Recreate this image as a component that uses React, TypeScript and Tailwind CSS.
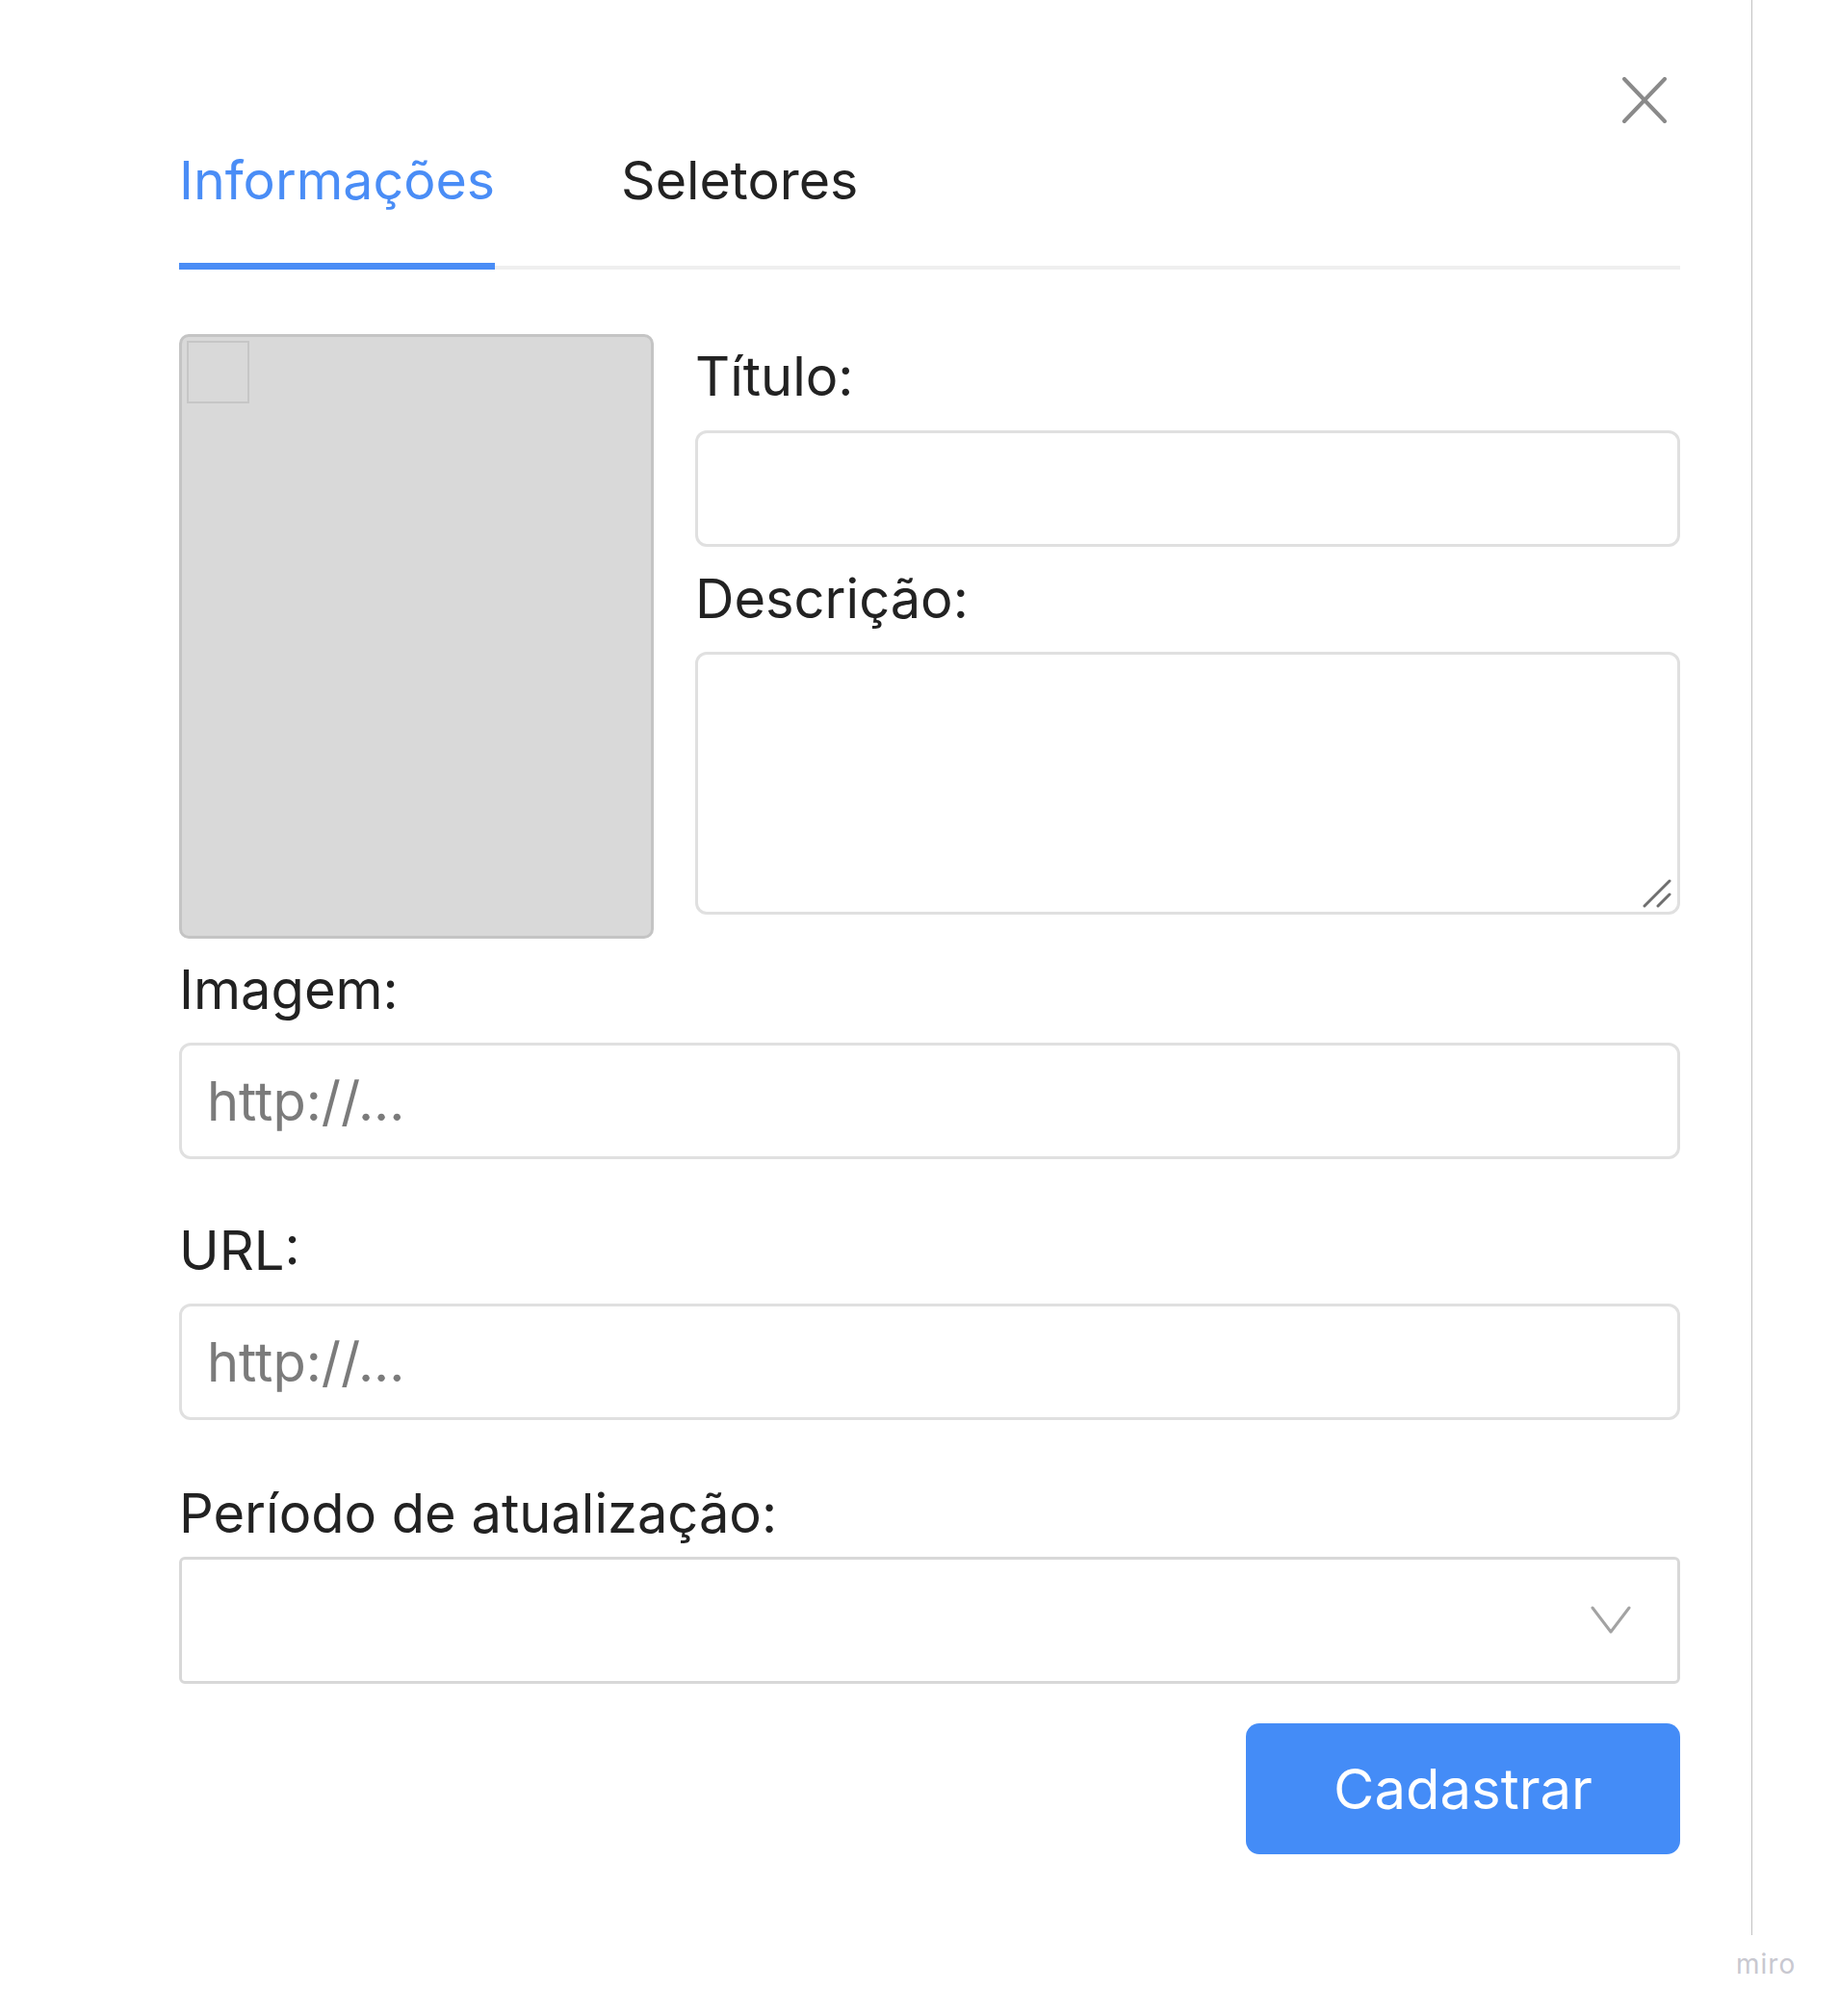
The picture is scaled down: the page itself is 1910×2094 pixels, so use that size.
import React, { useState } from "react";

const labelCls = "block text-[56px] leading-[67px] text-[#222222]";
const inputCls =
  "block w-full h-[121px] rounded-[12px] border-[3px] border-[#e0e0e0] bg-white pl-[26px] pr-[26px] text-[56px] text-[#222222] outline-none placeholder:text-[#7b7b7b]";

function CloseIcon() {
  return (
    <svg width="46" height="48" viewBox="0 0 46 48" fill="none">
      <path d="M2 2 L44 46 M44 2 L2 46" stroke="#8a8a8a" strokeWidth="4" strokeLinecap="round" />
    </svg>
  );
}

function Chevron() {
  return (
    <svg width="42" height="30" viewBox="0 0 42 30" fill="none">
      <path d="M2 2 L21 27 L40 2" stroke="#a3a3a3" strokeWidth="3" strokeLinecap="round" strokeLinejoin="round" />
    </svg>
  );
}

function ResizeHandle() {
  return (
    <svg width="30" height="30" viewBox="0 0 30 30" fill="none">
      <path d="M2 28 L28 2 M16 28 L28 16" stroke="#6f6f6f" strokeWidth="3" strokeLinecap="round" />
    </svg>
  );
}

export default function App() {
  const [tab, setTab] = useState<"info" | "sel">("info");

  return (
    <div className="w-[1910px] h-[2094px] bg-white font-['Inter','Noto_Sans',sans-serif] text-[#222222]">
      <div className="w-[1820px] h-[2010px] border-r border-[#c2c2c2] pl-[186px] pr-[74px] pt-[80px]">
        {/* close */}
        <div className="flex justify-end pr-[14px] h-[48px]">
          <button type="button" className="block">
            <CloseIcon />
          </button>
        </div>

        {/* tabs */}
        <div className="mt-[25px] flex gap-[131px] border-b-4 border-[#efefef]">
          <button
            type="button"
            onClick={() => setTab("info")}
            className={
              "-mb-[4px] pb-[53px] border-b-[7px] text-[55.5px] leading-[67px] " +
              (tab === "info" ? "border-[#4a8df6] text-[#4a8df6]" : "border-transparent text-[#222222]")
            }
          >
            Informações
          </button>
          <button
            type="button"
            onClick={() => setTab("sel")}
            className={
              "-mb-[4px] pb-[53px] border-b-[7px] text-[55.5px] leading-[67px] " +
              (tab === "sel" ? "border-[#4a8df6] text-[#4a8df6]" : "border-transparent text-[#222222]")
            }
          >
            Seletores
          </button>
        </div>

        {/* top block: image preview + title/description */}
        <div className="mt-[67px] flex gap-[43px]">
          <div className="w-[493px] h-[628px] shrink-0 rounded-[10px] border-[3px] border-[#c4c4c4] bg-[#d9d9d9] pl-[5px] pt-[4px]">
            <div className="w-[65px] h-[65px] border-2 border-[#c6c6c6]" />
          </div>
          <div className="flex-1 flex flex-col pt-[11px]">
            <label className={labelCls}>Título:</label>
            <input className={inputCls + " mt-[22px]"} />
            <label className={labelCls + " mt-[21px]"}>Descrição:</label>
            <div className="relative mt-[21px]">
              <textarea className="block w-full h-[273px] resize-none rounded-[12px] border-[3px] border-[#e0e0e0] bg-white p-[26px] text-[56px] outline-none" />
              <div className="absolute right-[9px] bottom-[7px]">
                <ResizeHandle />
              </div>
            </div>
          </div>
        </div>

        <label className={labelCls + " mt-[20px]"}>Imagem:</label>
        <input className={inputCls + " mt-[21px] h-[120px]"} placeholder="http://..." />

        <label className={labelCls + " mt-[62px]"}>URL:</label>
        <input className={inputCls + " mt-[21px] h-[120px]"} placeholder="http://..." />

        <label className={labelCls + " mt-[64px]"}>Período de atualização:</label>
        <div className="mt-[11px] h-[132px] rounded-[6px] border-[3px] border-[#d8d8d8] bg-white flex items-center justify-end pr-[48px]">
          <Chevron />
        </div>

        <div className="mt-[41px] flex justify-end">
          <button
            type="button"
            className="w-[451px] h-[136px] rounded-[14px] bg-[#448cf7] text-white text-[58px] leading-none"
          >
            Cadastrar
          </button>
        </div>
      </div>
      <div className="pl-[1803px] pt-[10px] text-[28px] leading-[40px] tracking-[1px] text-[#c8c8d0]">miro</div>
    </div>
  );
}
